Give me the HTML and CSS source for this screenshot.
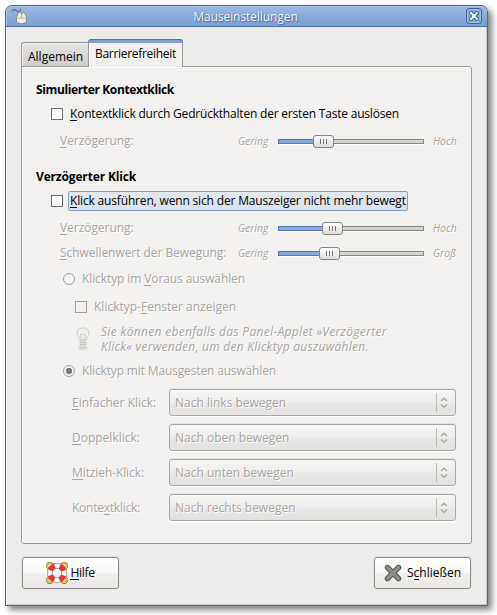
FILE: index.html
```html
<!DOCTYPE html>
<html lang="de">
<head>
<meta charset="utf-8">
<title>Mauseinstellungen</title>
<link rel="stylesheet" href="styles.css">
</head>
<body>
<main class="window">
  <header class="titlebar">
    <svg class="mouse" width="18" height="18" viewBox="0 0 18 18">
      <path d="M1 4.500C2 2 4 2 5.500 3.800S9 5.500 9.500 2" fill="none" stroke="#55708f" stroke-width="1.300"/>
      <path d="M7.500 5.500Q10.500 4.500 13.500 5.500L15.500 10.500V15Q10.500 18.500 5.500 15V10.500Z" fill="#f0f0eb" stroke="#8a8c82"/>
      <path d="M5.700 11.200H15.300M10.500 8.500V11" stroke="#b6b6ae" fill="none"/>
      <path d="M9 5.700H12L10.600 9Z" fill="#78a4dd"/>
    </svg>
    <h1 class="title">Mauseinstellungen</h1>
    <span class="close"><svg width="10" height="10" viewBox="0 0 10 10"><path d="M2 2L8 8M8 2L2 8" stroke="#355a8c" stroke-width="4" stroke-linecap="square"/><path d="M2 2L8 8M8 2L2 8" stroke="#fff" stroke-width="2" stroke-linecap="square"/></svg></span>
  </header>

  <nav class="tabs">
    <span class="tab">Allgemein</span>
    <span class="tab active">Barrierefreiheit</span>
  </nav>

  <section class="panel">
    <h2 class="heading tight">Simulierter Kontextklick</h2>
    <div class="row check"><i class="box"></i><span class="label hold"><u>K</u>ontextklick durch Gedrückthalten der ersten Taste auslösen</span></div>
    <div class="row slider off">
      <span class="name"><u>V</u>erzögerung:</span><em class="low">Gering</em>
      <span class="scale s1"><i class="fill"></i><i class="knob"></i><i class="rest"></i></span><em class="high">Hoch</em>
    </div>

    <h2 class="heading second">Verzögerter Klick</h2>
    <div class="row check"><i class="box"></i><span class="label focus"><u>K</u>lick ausführen, wenn sich der Mauszeiger nicht mehr bewegt</span></div>
    <div class="row slider off">
      <span class="name"><u>V</u>erzögerung:</span><em class="low">Gering</em>
      <span class="scale s2"><i class="fill"></i><i class="knob"></i><i class="rest"></i></span><em class="high">Hoch</em>
    </div>
    <div class="row slider short off">
      <span class="name"><u>S</u>chwellenwert der Bewegung:</span><em class="low">Gering</em>
      <span class="scale s3"><i class="fill"></i><i class="knob"></i><i class="rest"></i></span><em class="high">Groß</em>
    </div>

    <div class="row radio tall off"><i class="dot"></i><span class="ahead">Klicktyp im <u>V</u>oraus auswählen</span></div>
    <div class="row subcheck off"><i class="box"></i><span>Klicktyp-<u>F</u>enster anzeigen</span></div>
    <div class="row hint off">
      <svg width="16" height="24" viewBox="0 0 16 24">
        <ellipse cx="8" cy="21" rx="5.500" ry="2" fill="#dddcda"/>
        <path d="M5 13C4.500 10.500 2 9.500 2 6.300C2 3 4.500 1 8 1S14 3 14 6.300C14 9.500 11.500 10.500 11 13Z" fill="#f0f0ee" stroke="#c9c8c4"/>
        <path d="M6.500 13L5.500 7L8 8L10.500 7L9.500 13" fill="none" stroke="#d2d1cd"/>
        <path d="M5 13.500H11V19L9.500 21H6.500L5 19Z" fill="#e7e6e3" stroke="#cccbc7" stroke-width=".8"/>
        <path d="M5 15.500H11M5 17.500H11M6.500 20H9.500" stroke="#c6c4c0"/>
      </svg>
      <p><span class="line1">Sie können ebenfalls das Panel-Applet »Verzögerter</span><br><span class="line2">Klick« verwenden, um den Klicktyp auszuwählen.</span></p>
    </div>
    <div class="row radio off"><i class="dot on"></i><span class="gesture">Klicktyp mit Mausgesten auswählen</span></div>

    <div class="combos off">
      <span><u>E</u>infacher Klick:</span>
      <div class="combo"><span>Nach links bewegen</span><svg width="8" height="12" viewBox="0 0 8 12"><path d="M1 4L4 1.300L7 4M1 7.500L4 10.200L7 7.500"/></svg></div>
      <span><u>D</u>oppelklick:</span>
      <div class="combo"><span>Nach oben bewegen</span><svg width="8" height="12" viewBox="0 0 8 12"><path d="M1 4L4 1.300L7 4M1 7.500L4 10.200L7 7.500"/></svg></div>
      <span class="drag"><u>M</u>itzieh-Klick:</span>
      <div class="combo"><span>Nach unten bewegen</span><svg width="8" height="12" viewBox="0 0 8 12"><path d="M1 4L4 1.300L7 4M1 7.500L4 10.200L7 7.500"/></svg></div>
      <span class="context">Konte<u>x</u>tklick:</span>
      <div class="combo"><span>Nach rechts bewegen</span><svg width="8" height="12" viewBox="0 0 8 12"><path d="M1 4L4 1.300L7 4M1 7.500L4 10.200L7 7.500"/></svg></div>
    </div>
  </section>

  <footer class="actions">
    <button class="btn help">
      <svg width="22" height="22" viewBox="0 0 22 22">
        <g fill="none" stroke="#9c7c05" stroke-width="2"><circle cx="3.800" cy="3.800" r="2.700"/><circle cx="18.200" cy="3.800" r="2.700"/><circle cx="3.800" cy="18.200" r="2.700"/><circle cx="18.200" cy="18.200" r="2.700"/></g>
        <g fill="none" stroke="#f0d34a" stroke-width="1"><circle cx="3.800" cy="3.800" r="2.700"/><circle cx="18.200" cy="3.800" r="2.700"/><circle cx="3.800" cy="18.200" r="2.700"/><circle cx="18.200" cy="18.200" r="2.700"/></g>
        <circle cx="11" cy="11" r="7.200" fill="none" stroke="#8a8a86" stroke-width="6"/>
        <circle cx="11" cy="11" r="7.200" fill="none" stroke="#f3f3f1" stroke-width="4.600"/>
        <circle cx="11" cy="11" r="7.200" fill="none" stroke="#ed3237" stroke-width="5" stroke-dasharray="6.200 5.110" stroke-dashoffset="-2.550"/>
      </svg><span class="helptext"><u>H</u>ilfe</span>
    </button>
    <button class="btn">
      <svg class="cross" width="18" height="18" viewBox="0 0 18 18"><path d="M3.500 3.500L14.500 14.500M14.500 3.500L3.500 14.500" stroke="#50534f" stroke-width="5.400" stroke-linecap="round"/><path d="M3.500 3.500L14.500 14.500M14.500 3.500L3.500 14.500" stroke="#8b8e89" stroke-width="3.600" stroke-linecap="round"/></svg><span>S<u>c</u>hließen</span>
    </button>
  </footer>
</main>
</body>
</html>
```
FILE: styles.css
```css
* { box-sizing: border-box; }
body {
  margin: 0;
  padding: 5px 0 0 5px;
  min-height: 615px;
  background: #fff;
  color: #000;
  font: 12px/16px "Open Sans", "Noto Sans", sans-serif;
  white-space: nowrap;
  overflow: hidden;
}
h1, h2, p { margin: 0; }
i { font-style: normal; flex: none; }
svg { display: block; flex: none; }
u { text-decoration: none; border-bottom: 1px solid; display: inline-block; line-height: 13px; }

.window {
  width: 483px;
  height: 601px;
  display: flex;
  flex-direction: column;
  background: #edeceb;
  border: 1px solid #666763;
  border-top-color: #40648f;
  border-radius: 7px 7px 0 0;
  box-shadow: inset 1px 0 #fafafa, inset -1px -1px #cac9c5, 4px 4px 6px rgba(0,0,0,.5);
}

.titlebar {
  flex: none;
  height: 21px;
  display: flex;
  align-items: center;
  padding: 0 5px;
  border-radius: 6px 6px 0 0;
  border-bottom: 1px solid #4a72ab;
  background: linear-gradient(#9bb9e5, #7a9fd0);
  box-shadow: inset 1px 1px #a9c5ec;
}
.title {
  flex: 1;
  padding: 1px 4px 0 0;
  text-align: center;
  color: #fff;
  font-size: 12px;
  font-weight: 400;
  letter-spacing: -.08px;
  text-shadow: 0 0 1px #2f5388, 1px 1px 1px #476da2;
}
.close {
  width: 16px;
  height: 16px;
  display: grid;
  place-items: center;
  border: 1px solid #3d6498;
  border-radius: 3px;
  background: #87aad9;
  box-shadow: inset 0 0 0 1px #9dbce6;
}

.tabs {
  flex: none;
  display: flex;
  align-items: flex-end;
  height: 40px;
  margin: 0 15px -1px;
  z-index: 1;
}
.tab {
  width: 67px;
  height: 25px;
  padding: 6px 0 0 6px;
  border: 1px solid #9c9a96;
  border-right: 0;
  border-radius: 3px 0 0 0;
  background: linear-gradient(#e6e5e3, #cfcdca);
  box-shadow: inset 1px 1px #f3f3f2;
}
.tab:first-child { border-bottom-color: #9c9a96; }
.tab.active {
  width: 95px;
  height: 27px;
  padding-top: 3px;
  border: 1px solid #9c9a96;
  border-top: 3px solid #7da2d4;
  border-bottom: 0;
  border-radius: 3px 3px 0 0;
  background: #f2f1f0;
  box-shadow: inset 1px 0 #fff, 0 -1px #4e75a8;
  letter-spacing: -.3px;
}

.panel {
  height: 478px;
  flex: none;
  margin: 0 15px;
  padding: 11px 14px 0;
  border: 1px solid #9c9a96;
  border-radius: 0 3px 3px 3px;
  background: #f2f1f0;
  box-shadow: inset 1px 1px #fff;
}
.heading {
  font-size: 12px;
  font-weight: 700;
  line-height: 24px;
  letter-spacing: -.16px;
}
.heading.tight { letter-spacing: -.37px; }
.heading.second { margin-top: 9px; }

.row { display: flex; align-items: center; height: 24px; }
.off { color: #a7a5a1; text-shadow: 1px 1px #fff; }
.box {
  width: 12px;
  height: 12px;
  border: 1px solid #6f6e6b;
  background: #fff;
}
.check { padding-left: 15px; }
.label { margin-left: 5px; padding: 0 1px; height: 20px; line-height: 18px; border: 1px solid transparent; }
.hold { letter-spacing: -.2px; }
.focus {
  width: 340px;
  letter-spacing: -.165px;
  border-color: #86a0c3;
  border-radius: 2px;
  background: linear-gradient(#e3e8ed, #dae2ec);
}

.slider { height: 30px; padding-left: 24px; }
.slider.short { height: 20px; }
.name { width: 178px; letter-spacing: -.05px; }
.low, .high { font-size: 10.400px; line-height: 14px; padding-bottom: 1px; }
.low { width: 40px; }
.high { margin-left: 9px; }
.scale { display: flex; align-items: center; width: 146px; }
.fill {
  width: 35px;
  height: 5px;
  border: 1px solid #5579ab;
  border-right: 0;
  background: #87abdc;
  box-shadow: 0 1px #fff;
}
.s2 .fill { width: 44px; }
.s3 .fill { width: 41px; }
.rest {
  flex: 1;
  height: 5px;
  border: 1px solid #858481;
  border-left: 0;
  background: #d6d5d2;
  box-shadow: 0 1px #fff;
}
.knob {
  width: 21px;
  height: 13px;
  border: 1px solid #868582;
  border-radius: 3px;
  background:
    linear-gradient(#777, #777) 6px 3px / 1px 5px no-repeat,
    linear-gradient(#777, #777) 9px 3px / 1px 5px no-repeat,
    linear-gradient(#777, #777) 12px 3px / 1px 5px no-repeat,
    linear-gradient(#fff, #dddcda);
}

.radio { padding-left: 27px; }
.radio.tall { height: 32px; }
.dot {
  width: 12px;
  height: 12px;
  margin-right: 7px;
  border: 1px solid #a3a19e;
  border-radius: 50%;
  background: #f5f4f3;
}
.dot.on { background: radial-gradient(circle, #777 0 2.800px, #f5f4f3 3.600px); }
.ahead { letter-spacing: -.1px; }
.gesture { letter-spacing: -.15px; }
.subcheck { padding-left: 39px; }
.subcheck .box { margin-right: 7px; border-color: #a3a19e; background: #f2f1f0; }
.hint { height: 40px; padding-left: 39px; gap: 10px; font-style: italic; line-height: 15px; }
.line1 { letter-spacing: .32px; }
.line2 { letter-spacing: .26px; }

.combos {
  display: grid;
  grid-template-columns: 97px 287px;
  grid-auto-rows: 27px;
  row-gap: 8px;
  align-items: center;
  padding: 6px 0 0 36px;
}
.drag { letter-spacing: -.1px; }
.context { letter-spacing: -.24px; }
.combo {
  display: flex;
  align-items: center;
  justify-content: space-between;
  height: 27px;
  padding: 0 7px 0 5px;
  border: 1px solid #aaa9a5;
  border-radius: 3px;
  background:
    linear-gradient(#bbb9b6, #bbb9b6) 266px 3px / 1px 19px no-repeat,
    linear-gradient(#f5f5f4, #eeedec 50%, #e8e7e5 51%, #e3e2e0);
  box-shadow: 0 1px #fff, 0 -1px #e6e5e3;
}
.combo path { fill: none; stroke: #a9a7a4; stroke-width: 1.400; }

.actions { display: flex; justify-content: space-between; padding: 13px 16px 0 16px; }
.btn {
  width: 97px;
  height: 32px;
  display: flex;
  align-items: center;
  justify-content: center;
  gap: 5px;
  padding: 0;
  font: inherit;
  color: #000;
  border: 1px solid #8c8b88;
  border-radius: 3px;
  background: linear-gradient(#fff, #f8f8f7 50%, #f1f0ef 51%, #e8e7e6);
  box-shadow: 0 0 0 1px #e4e3e1;
}
.help { gap: 2px; }
.helptext { letter-spacing: -.3px; }
```
